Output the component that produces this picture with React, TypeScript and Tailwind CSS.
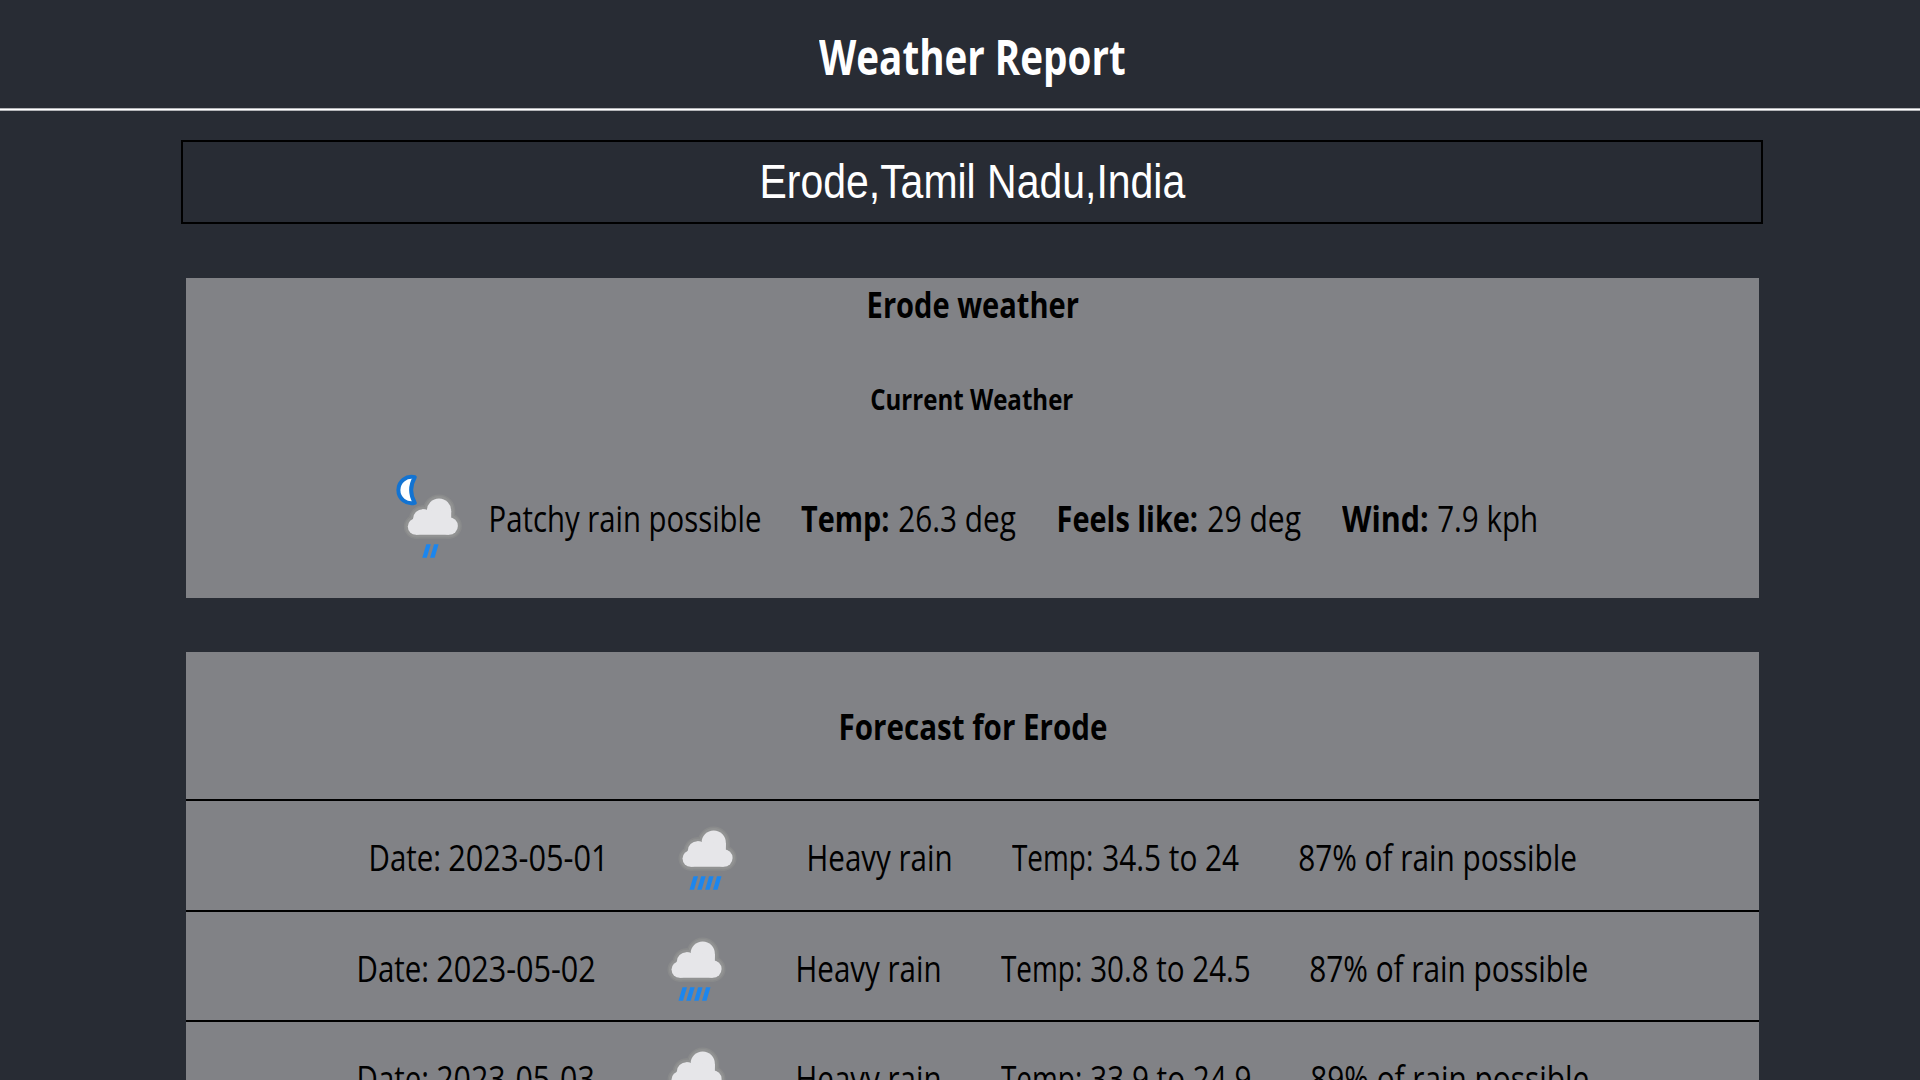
import React from "react";

const ctx = document.createElement("canvas").getContext("2d")!;

type FitProps = { children: string; width: number; size?: number; bold?: boolean; family?: string; className?: string };

// Condenses a line of text horizontally so that its inked extent fills `width`.
function Fit({ children, width, size = 36.4, bold = false, family = "Open Sans", className = "" }: FitProps) {
  ctx.font = `${bold ? 700 : 400} ${size}px "${family}"`;
  const m = ctx.measureText(children);
  const scale = width / (m.actualBoundingBoxLeft + m.actualBoundingBoxRight);
  return (
    <span className={`block h-[50px] shrink-0 whitespace-nowrap leading-[50px] ${className}`} style={{ width }}>
      <span
        className="inline-block origin-left"
        style={{
          fontFamily: `"${family}", sans-serif`,
          fontSize: size,
          fontWeight: bold ? 700 : 400,
          transform: `translateX(${m.actualBoundingBoxLeft * scale}px) scaleX(${scale})`,
        }}
      >
        {children}
      </span>
    </span>
  );
}

function CloudShape() {
  return (
    <>
      <ellipse cx="43.700" cy="29" rx="12.200" ry="12.600" />
      <circle cx="27.500" cy="37" r="9.800" />
      <circle cx="20.700" cy="44.600" r="8.200" />
      <circle cx="53.800" cy="44" r="8.800" />
      <path d="M27 27.400Q30.500 27 32.500 28.500L55.900 29V36L53.600 52.700H20.700L17.700 37Z" />
    </>
  );
}

function Cloud({ drops }: { drops: number[] }) {
  return (
    <g>
      <g fill="#898a8b" stroke="#898a8b" strokeWidth="8" strokeLinejoin="round">
        <CloudShape />
      </g>
      <g fill="#919292" stroke="#919292" strokeWidth="5" strokeLinejoin="round">
        <CloudShape />
      </g>
      <g fill="#e6e6e9">
        <CloudShape />
      </g>
      {drops.map((x) => (
        <path key={x} d={`M${x + 3.9} 62.300h4.500l-4 13.400h-4.500Z`} fill="#1c86ee" />
      ))}
    </g>
  );
}

function RainIcon() {
  return (
    <svg className="h-[84px] w-[80px] shrink-0" viewBox="0 0 80 84">
      <Cloud drops={[19.6, 27.3, 35.2, 43.1]} />
    </svg>
  );
}

function NightRainIcon() {
  return (
    <svg className="h-[96px] w-[80px] shrink-0" viewBox="0 0 80 96">
      <g transform="translate(5.300 14)">
        <Cloud drops={[27.1, 34.9]} />
      </g>
      <path d="M24.800 9.300A13.200 13.200 0 1 0 24.800 34.900Q17.500 22 24.800 9.300Z" fill="#fff" stroke="#1273d2" strokeWidth="4" strokeLinejoin="round" />
    </svg>
  );
}

type Day = { date: string; dateW: number; temp: string; tempW: number; chance: string; chanceW: number; pad: string; gap: string };

const days: Day[] = [
  { date: "2023-05-01", dateW: 153, temp: "34.5 to 24", tempW: 136.3, chance: "87%", chanceW: 276.7, pad: "pl-[184.8px]", gap: "w-[207.600px] pl-[68.600px]" },
  { date: "2023-05-02", dateW: 157.3, temp: "30.8 to 24.5", tempW: 158.3, chance: "87%", chanceW: 277, pad: "pl-[172.8px]", gap: "w-[204.100px] pl-[64.700px]" },
  { date: "2023-05-03", dateW: 156.3, temp: "33.9 to 24.9", tempW: 159, chance: "89%", chanceW: 277, pad: "pl-[172.8px]", gap: "w-[205.100px] pl-[65.700px]" },
];

export default function App() {
  return (
    <div className="h-[1080px] overflow-hidden bg-[#282c34] text-black">
      <header className="flex h-[108px] justify-center pt-[32px] pl-[24px] text-white">
        <Fit width={306} size={48} bold>Weather Report</Fit>
      </header>
      <div className="h-[3px] border-y border-[#b4b5b8] bg-white" />
      <main className="ml-[181px] w-[1582px]">
        <div className="mt-[29px] flex h-[84px] justify-center border-2 border-black pt-[15px] pl-[3px] text-white">
          <Fit width={423.5} size={48} family="Liberation Sans">Erode,Tamil Nadu,India</Fit>
        </div>
        <section className="mr-[4px] ml-[5px] mt-[53.500px] h-[320.500px] bg-[#818286]">
          <div className="flex justify-center pt-[1px] pl-[2px]">
            <Fit width={209.5} bold>Erode weather</Fit>
          </div>
          <div className="mt-[45px] flex justify-center pr-[1px]">
            <Fit width={202} size={29.400} bold>Current Weather</Fit>
          </div>
          <div className="mt-[44px] flex h-[96px] items-start pl-[204px]">
            <NightRainIcon />
            <div className="flex pt-[25px] pl-[21.200px]">
              <Fit width={269.2}>Patchy rain possible</Fit>
              <Fit width={87.3} bold className="ml-[40.300px]">Temp:</Fit>
              <Fit width={117} className="ml-[10.700px]">26.3 deg</Fit>
              <Fit width={138} bold className="ml-[43.700px]">Feels like:</Fit>
              <Fit width={93.3} className="ml-[10.200px]">29 deg</Fit>
              <Fit width={85.6} bold className="ml-[40.700px]">Wind:</Fit>
              <Fit width={98.3} className="ml-[10.400px]">7.9 kph</Fit>
            </div>
          </div>
        </section>
        <section className="mr-[4px] ml-[5px] mt-[54px] bg-[#818286]">
          <div className="flex h-[147px] justify-center pt-[49px] pl-[1.500px]">
            <Fit width={265.2} bold>Forecast for Erode</Fit>
          </div>
          {days.map((d) => (
            <div key={d.date} className={`flex h-[110.500px] items-start border-t-2 border-black ${d.pad}`}>
              <Fit width={68} className="mt-[31px]">Date:</Fit>
              <Fit width={d.dateW} className="mt-[31px] ml-[10px]">{d.date}</Fit>
              <div className={`shrink-0 pt-[13px] ${d.gap}`}>
                <RainIcon />
              </div>
              <Fit width={141.7} className="mt-[31px]">Heavy rain</Fit>
              <Fit width={79.3} className="mt-[31px] ml-[61px]">Temp:</Fit>
              <Fit width={d.tempW} className="mt-[31px] ml-[11.300px]">{d.temp}</Fit>
              <Fit width={d.chanceW} className="mt-[31px] ml-[60.200px]">{`${d.chance} of rain possible`}</Fit>
            </div>
          ))}
        </section>
      </main>
    </div>
  );
}
